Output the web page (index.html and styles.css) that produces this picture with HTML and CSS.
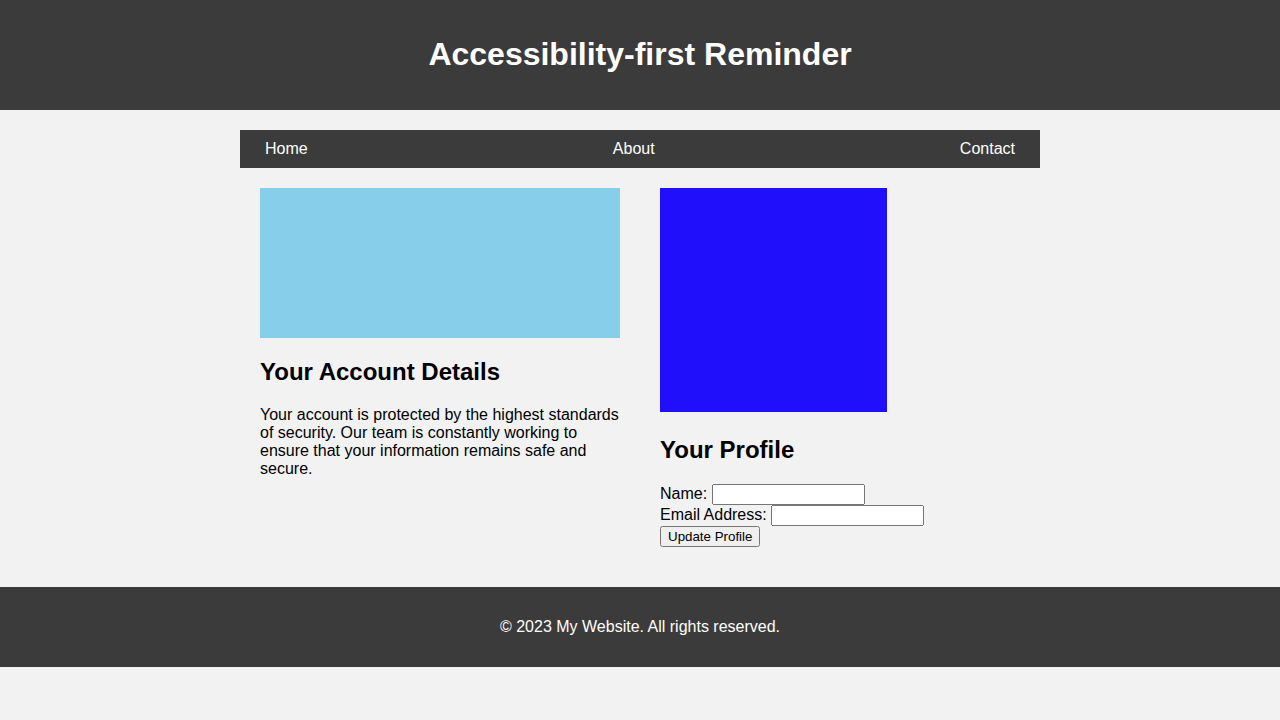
FILE: index.html
```html
<!DOCTYPE html>
<html lang="en">
<head>
<meta charset="utf-8">
<title>Accessibility-first Reminder</title>
<link rel="stylesheet" href="styles.css">
</head>
<body>
<header class="site-header">
  <h1>Accessibility-first Reminder</h1>
</header>
<div class="container">
  <nav class="nav">
    <a href="#">Home</a>
    <a href="#">About</a>
    <a href="#">Contact</a>
  </nav>
  <main class="main">
    <section class="card">
      <div class="pic pic-sky"></div>
      <h2>Your Account Details</h2>
      <p>Your account is protected by the highest standards of security. Our team is constantly working to ensure that your information remains safe and secure.</p>
    </section>
    <section class="card">
      <div class="pic-line"><span class="pic pic-blue"></span></div>
      <h2>Your Profile</h2>
      <form class="form">
        <label for="name">Name:</label> <input type="text" id="name"><br>
        <label for="email">Email Address:</label> <input type="email" id="email"><br>
        <button type="button">Update Profile</button>
      </form>
    </section>
  </main>
</div>
<footer class="site-footer">
  <p>© 2023 My Website. All rights reserved.</p>
</footer>
</body>
</html>
```

FILE: styles.css
```css
body {
  margin: 0;
  background: #f2f2f2;
  font-family: "Liberation Sans", Arial, sans-serif;
  color: #000;
}
.site-header {
  background: #3b3b3b;
  color: #fff;
  text-align: center;
  padding: 15px 0;
}
.site-header h1 {
  font-size: 32px;
  margin: 0.67em 0;
}
.container {
  width: 800px;
  margin: 20px auto 0;
}
.nav {
  background: #3b3b3b;
  display: flex;
  justify-content: space-between;
  padding: 10px 25px;
}
.nav a {
  color: #fff;
  text-decoration: none;
  font-size: 16px;
  line-height: 18px;
}
.main {
  display: flex;
}
.card {
  width: 360px;
  margin: 20px;
}
.pic-sky {
  width: 360px;
  height: 150px;
  background: #87ceeb;
}
.pic-line {
  font-size: 16px;
}
.pic-blue {
  display: inline-block;
  vertical-align: baseline;
  width: 227px;
  height: 224px;
  background: #1f0ffa;
}
.card h2 {
  font-size: 24px;
  margin: 20px 0;
}
.card p {
  font-size: 16px;
  margin: 16px 0;
}
.form {
  font-size: 16px;
}
.form input {
  width: 153px;
  height: 21px;
  box-sizing: border-box;
  font-size: 13.33px;
}
.site-footer {
  background: #3b3b3b;
  color: #fff;
  text-align: center;
  padding: 15px 0;
  margin-top: 20px;
}
.site-footer p {
  margin: 16px 0;
  font-size: 16px;
}
```
